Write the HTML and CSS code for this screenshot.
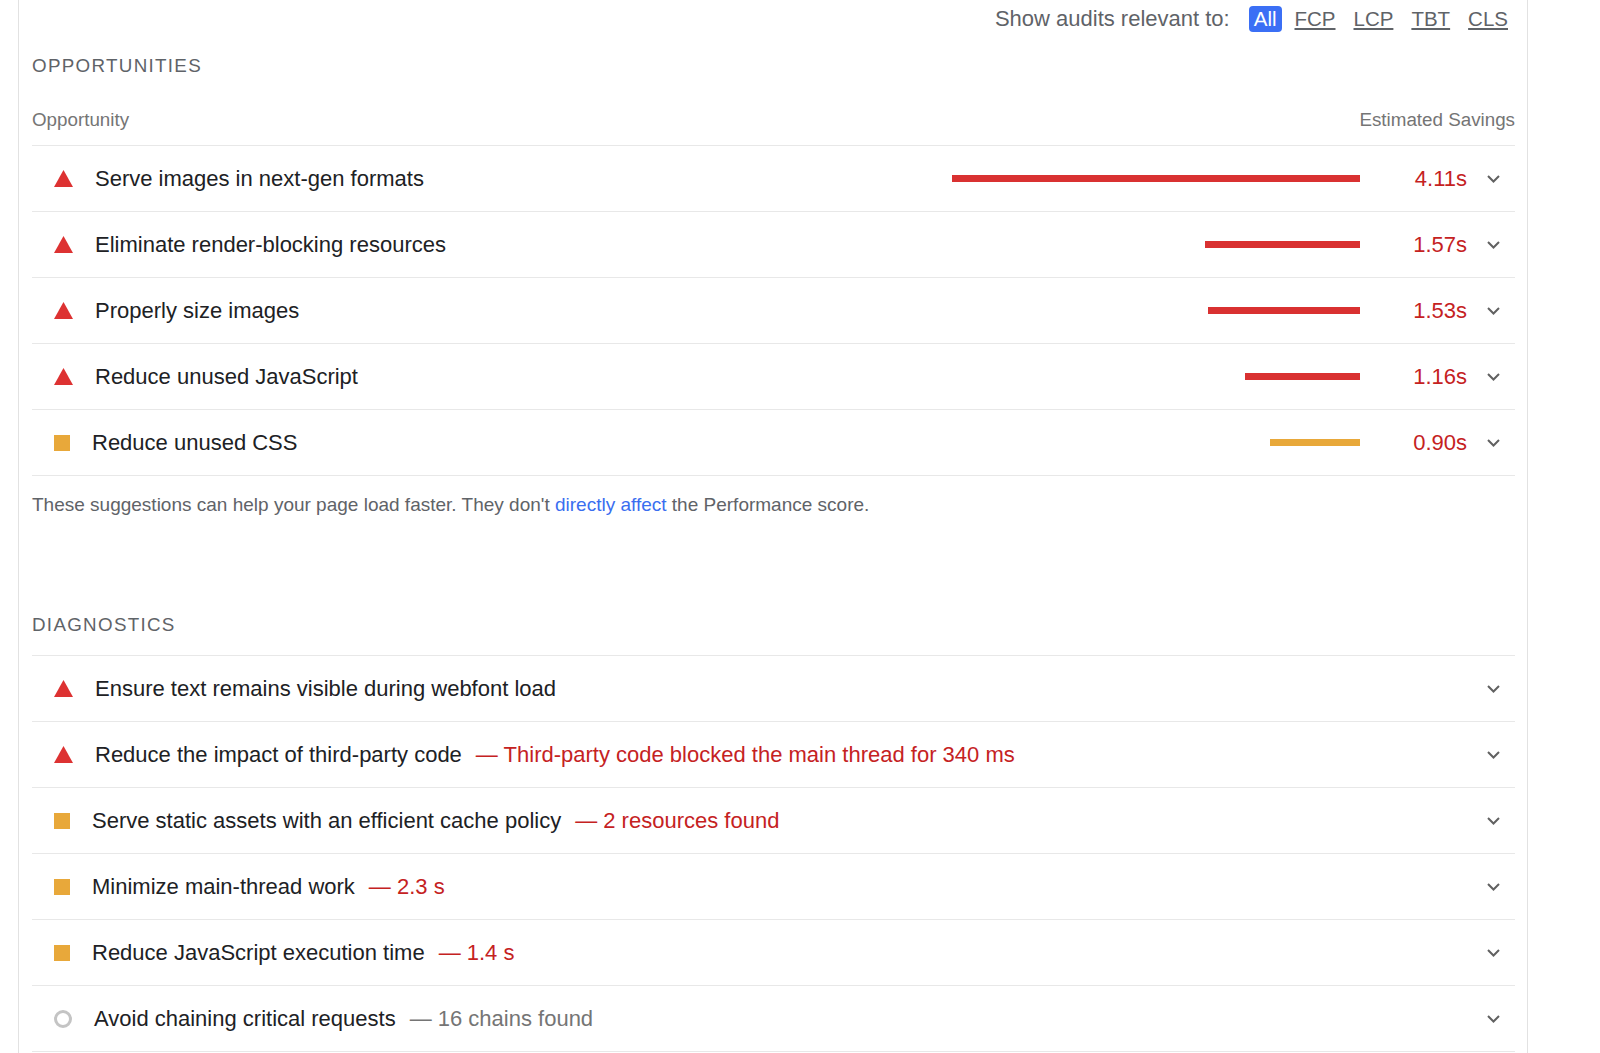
FILE: index.html
```html
<!DOCTYPE html>
<html lang="en">
<head>
    <meta charset="UTF-8">
    <title>Performance audits</title>
    <link rel="stylesheet" href="styles.css">
</head>
<body>

    <div class="report">

        <!-- Filter Bar -->
        <div class="filter">
            <span class="filter-label">Show audits relevant to:</span>
            <span class="chip chip-active">All</span>
            <a class="chip" href="#">FCP</a>
            <a class="chip" href="#">LCP</a>
            <a class="chip" href="#">TBT</a>
            <a class="chip" href="#">CLS</a>
        </div>

        <!-- Opportunities -->
        <div class="group-title">Opportunities</div>
        <div class="table-head">
            <span>Opportunity</span>
            <span>Estimated Savings</span>
        </div>

        <div class="audit">
            <span class="icon icon-fail"><svg width="19" height="17" viewBox="0 0 19 17"><polygon points="9.5,0 19,17 0,17" fill="#dd3232"/></svg></span>
            <span class="audit-title">Serve images in next-gen formats</span>
            <span class="bar bar-fail" style="width: 408px"></span>
            <span class="savings">4.11s</span>
            <span class="toggle"><svg width="13" height="8" viewBox="0 0 13 8"><polyline points="1,1 6.5,6.5 12,1" fill="none" stroke="#616161" stroke-width="2"/></svg></span>
        </div>
        <div class="audit">
            <span class="icon icon-fail"><svg width="19" height="17" viewBox="0 0 19 17"><polygon points="9.5,0 19,17 0,17" fill="#dd3232"/></svg></span>
            <span class="audit-title">Eliminate render-blocking resources</span>
            <span class="bar bar-fail" style="width: 155px"></span>
            <span class="savings">1.57s</span>
            <span class="toggle"><svg width="13" height="8" viewBox="0 0 13 8"><polyline points="1,1 6.5,6.5 12,1" fill="none" stroke="#616161" stroke-width="2"/></svg></span>
        </div>
        <div class="audit">
            <span class="icon icon-fail"><svg width="19" height="17" viewBox="0 0 19 17"><polygon points="9.5,0 19,17 0,17" fill="#dd3232"/></svg></span>
            <span class="audit-title">Properly size images</span>
            <span class="bar bar-fail" style="width: 152px"></span>
            <span class="savings">1.53s</span>
            <span class="toggle"><svg width="13" height="8" viewBox="0 0 13 8"><polyline points="1,1 6.5,6.5 12,1" fill="none" stroke="#616161" stroke-width="2"/></svg></span>
        </div>
        <div class="audit">
            <span class="icon icon-fail"><svg width="19" height="17" viewBox="0 0 19 17"><polygon points="9.5,0 19,17 0,17" fill="#dd3232"/></svg></span>
            <span class="audit-title">Reduce unused JavaScript</span>
            <span class="bar bar-fail" style="width: 115px"></span>
            <span class="savings">1.16s</span>
            <span class="toggle"><svg width="13" height="8" viewBox="0 0 13 8"><polyline points="1,1 6.5,6.5 12,1" fill="none" stroke="#616161" stroke-width="2"/></svg></span>
        </div>
        <div class="audit">
            <span class="icon icon-average"></span>
            <span class="audit-title">Reduce unused CSS</span>
            <span class="bar bar-average" style="width: 90px"></span>
            <span class="savings">0.90s</span>
            <span class="toggle"><svg width="13" height="8" viewBox="0 0 13 8"><polyline points="1,1 6.5,6.5 12,1" fill="none" stroke="#616161" stroke-width="2"/></svg></span>
        </div>

        <p class="group-note">These suggestions can help your page load faster. They don't <a href="#">directly affect</a> the Performance score.</p>

        <!-- Diagnostics -->
        <div class="group-title group-title-lined">Diagnostics</div>

        <div class="audit">
            <span class="icon icon-fail"><svg width="19" height="17" viewBox="0 0 19 17"><polygon points="9.5,0 19,17 0,17" fill="#dd3232"/></svg></span>
            <span class="audit-title">Ensure text remains visible during webfont load</span>
            <span class="toggle"><svg width="13" height="8" viewBox="0 0 13 8"><polyline points="1,1 6.5,6.5 12,1" fill="none" stroke="#616161" stroke-width="2"/></svg></span>
        </div>
        <div class="audit">
            <span class="icon icon-fail"><svg width="19" height="17" viewBox="0 0 19 17"><polygon points="9.5,0 19,17 0,17" fill="#dd3232"/></svg></span>
            <span class="audit-title">Reduce the impact of third-party code<span class="display-text">— Third-party code blocked the main thread for 340 ms</span></span>
            <span class="toggle"><svg width="13" height="8" viewBox="0 0 13 8"><polyline points="1,1 6.5,6.5 12,1" fill="none" stroke="#616161" stroke-width="2"/></svg></span>
        </div>
        <div class="audit">
            <span class="icon icon-average"></span>
            <span class="audit-title">Serve static assets with an efficient cache policy<span class="display-text">— 2 resources found</span></span>
            <span class="toggle"><svg width="13" height="8" viewBox="0 0 13 8"><polyline points="1,1 6.5,6.5 12,1" fill="none" stroke="#616161" stroke-width="2"/></svg></span>
        </div>
        <div class="audit">
            <span class="icon icon-average"></span>
            <span class="audit-title">Minimize main-thread work<span class="display-text">— 2.3 s</span></span>
            <span class="toggle"><svg width="13" height="8" viewBox="0 0 13 8"><polyline points="1,1 6.5,6.5 12,1" fill="none" stroke="#616161" stroke-width="2"/></svg></span>
        </div>
        <div class="audit">
            <span class="icon icon-average"></span>
            <span class="audit-title">Reduce JavaScript execution time<span class="display-text">— 1.4 s</span></span>
            <span class="toggle"><svg width="13" height="8" viewBox="0 0 13 8"><polyline points="1,1 6.5,6.5 12,1" fill="none" stroke="#616161" stroke-width="2"/></svg></span>
        </div>
        <div class="audit">
            <span class="icon icon-info"></span>
            <span class="audit-title">Avoid chaining critical requests<span class="display-text display-text-info">— 16 chains found</span></span>
            <span class="toggle"><svg width="13" height="8" viewBox="0 0 13 8"><polyline points="1,1 6.5,6.5 12,1" fill="none" stroke="#616161" stroke-width="2"/></svg></span>
        </div>

    </div>

</body>
</html>
```

FILE: styles.css
```css
body {
    margin: 0;
    padding: 0;
    height: 100vh;
    overflow: hidden;
    background-color: #fff;
    font-family: "Liberation Sans", Arial, sans-serif;
    color: #202124;
}

.report {
    margin-left: 18px;
    width: 1483px;
    min-height: 100vh;
    padding: 0 12px 0 13px;
    border-left: 1px solid #e2e2e2;
    border-right: 1px solid #e2e2e2;
}

/* Filter Bar */
.filter {
    height: 38px;
    display: flex;
    justify-content: flex-end;
    align-items: center;
    padding-right: 7px;
    font-size: 22px;
    color: #5f6368;
}

.filter-label {
    margin-right: 19px;
}

.chip {
    font-size: 20.5px;
    color: #5f6368;
    margin-left: 18px;
}

.chip-active {
    margin-left: 0;
    padding: 1px 5px;
    background-color: #3b6ff5;
    color: white;
    border-radius: 4px;
}

.chip-active + .chip {
    margin-left: 13px;
}

/* Group Titles */
.group-title {
    margin-top: 16px;
    font-size: 18.8px;
    line-height: 24px;
    letter-spacing: 1.3px;
    text-transform: uppercase;
    color: #5f6368;
}

.group-title-lined {
    margin-top: 96px;
    padding-bottom: 18px;
    border-bottom: 1px solid #e8e8e8;
}

.table-head {
    display: flex;
    justify-content: space-between;
    margin-top: 30px;
    padding-bottom: 13px;
    font-size: 18.8px;
    line-height: 24px;
    color: #757575;
    border-bottom: 1px solid #e8e8e8;
}

/* Audit Rows */
.audit {
    height: 65px;
    display: flex;
    align-items: center;
    font-size: 22px;
    border-bottom: 1px solid #e8e8e8;
}

.icon {
    flex-shrink: 0;
    margin-left: 22px;
    margin-right: 22px;
    display: flex;
}

.icon-fail {
    width: 19px;
    height: 17px;
}

.icon-average {
    width: 16px;
    height: 16px;
    margin-right: 22px;
    background-color: #e8a83a;
}

.icon-info {
    width: 12px;
    height: 12px;
    margin-left: 22px;
    margin-right: 22px;
    border: 3px solid #c4c4c4;
    border-radius: 50%;
}

.audit-title {
    flex: 1;
}

.display-text {
    margin-left: 14px;
    color: #c5221f;
}

.display-text-info {
    color: #757575;
}

.bar {
    height: 7px;
}

.bar-fail {
    background-color: #d93131;
}

.bar-average {
    background-color: #e8a83a;
}

.savings {
    width: 107px;
    text-align: right;
    color: #c5221f;
}

.toggle {
    width: 48px;
    display: flex;
    justify-content: flex-end;
    padding-right: 15px;
    box-sizing: border-box;
}

.group-note {
    margin: 17px 0 0 0;
    font-size: 19px;
    line-height: 24px;
    color: #5f6368;
}

.group-note a {
    color: #3a6ef0;
    text-decoration: none;
}
```
